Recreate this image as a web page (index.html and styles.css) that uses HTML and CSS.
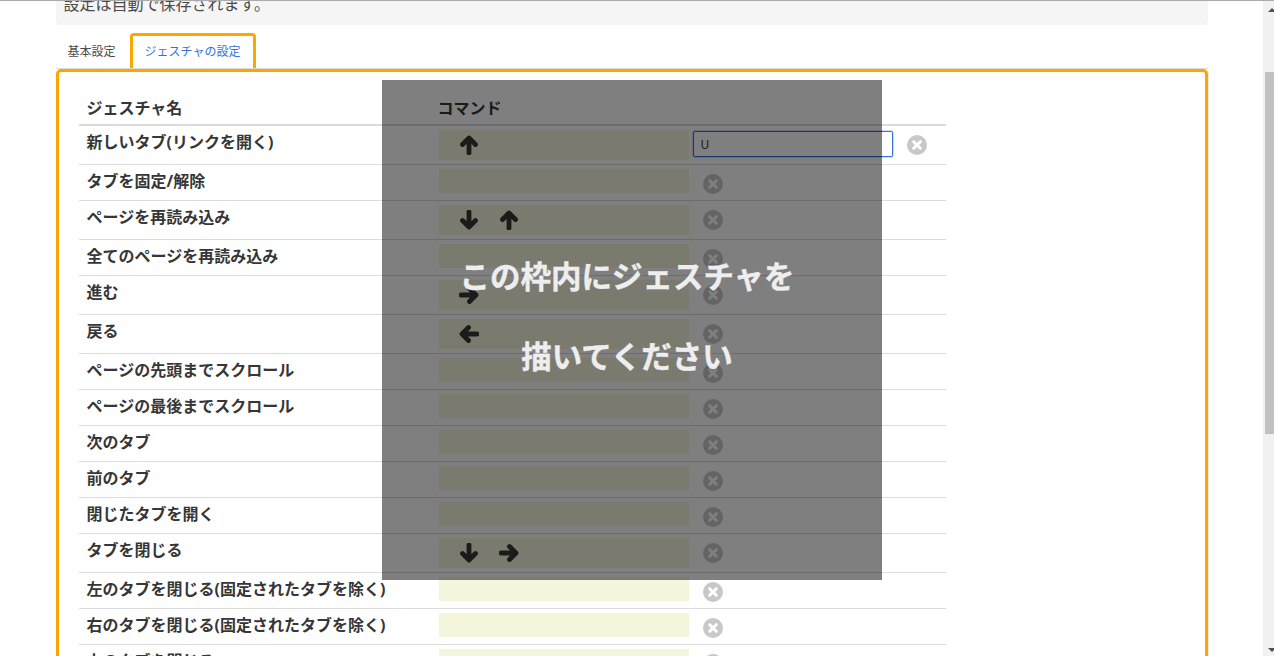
FILE: index.html
```html
<!DOCTYPE html>
<html lang="ja">
<head>
<meta charset="utf-8">
<title>ジェスチャの設定</title>
<link rel="stylesheet" href="styles.css">
</head>
<body>
<svg class="defs" width="0" height="0" aria-hidden="true">
  <defs>
    <symbol id="arrow-up" viewBox="0 0 20 20"><path d="M10 18V3.5M3.5 9.5L10 3L16.5 9.5" fill="none" stroke="currentColor" stroke-width="4.8" stroke-linejoin="round" stroke-linecap="round"/></symbol>
    <symbol id="arrow-down" viewBox="0 0 20 20"><path d="M10 2V16.5M3.5 10.5L10 17L16.5 10.5" fill="none" stroke="currentColor" stroke-width="4.8" stroke-linejoin="round" stroke-linecap="round"/></symbol>
    <symbol id="arrow-right" viewBox="0 0 20 20"><path d="M2 10H16.5M10.5 3.5L17 10L10.5 16.5" fill="none" stroke="currentColor" stroke-width="4.8" stroke-linejoin="round" stroke-linecap="round"/></symbol>
    <symbol id="arrow-left" viewBox="0 0 20 20"><path d="M18 10H3.5M9.5 3.5L3 10L9.5 16.5" fill="none" stroke="currentColor" stroke-width="4.8" stroke-linejoin="round" stroke-linecap="round"/></symbol>
    <symbol id="del" viewBox="0 0 20 20"><circle cx="10" cy="10" r="10" fill="#c8c8c8"/><path d="M6.7 6.7L13.3 13.3M13.3 6.7L6.7 13.3" stroke="#fff" stroke-width="3" stroke-linecap="round"/></symbol>
  </defs>
</svg>
<div class="window">
  <main class="page">
    <div class="container">
      <div class="notice"><p class="notice-text">設定は自動で保存されます。</p></div>
      <nav class="tabs">
        <a class="tab">基本設定</a>
        <a class="tab tab-active">ジェスチャの設定</a>
      </nav>
      <section class="panel">
        <div class="table">
          <div class="row row-head"><div class="name">ジェスチャ名</div><div class="head-cmd">コマンド</div></div>
          <div class="row">
            <div class="name">新しいタブ(リンクを開く)</div>
            <div class="cmd cmd-tall"><svg class="arrow"><use href="#arrow-up"/></svg></div>
            <input class="key" type="text" value="U">
            <svg class="del"><use href="#del"/></svg>
          </div>
          <div class="row"><div class="name">タブを固定/解除</div><div class="cmd"></div><svg class="del"><use href="#del"/></svg></div>
          <div class="row"><div class="name">ページを再読み込み</div><div class="cmd cmd-tall"><svg class="arrow"><use href="#arrow-down"/></svg><svg class="arrow"><use href="#arrow-up"/></svg></div><svg class="del"><use href="#del"/></svg></div>
          <div class="row"><div class="name">全てのページを再読み込み</div><div class="cmd"></div><svg class="del"><use href="#del"/></svg></div>
          <div class="row"><div class="name">進む</div><div class="cmd cmd-tall"><svg class="arrow"><use href="#arrow-right"/></svg></div><svg class="del"><use href="#del"/></svg></div>
          <div class="row"><div class="name">戻る</div><div class="cmd cmd-tall"><svg class="arrow"><use href="#arrow-left"/></svg></div><svg class="del"><use href="#del"/></svg></div>
          <div class="row"><div class="name">ページの先頭までスクロール</div><div class="cmd"></div><svg class="del"><use href="#del"/></svg></div>
          <div class="row"><div class="name">ページの最後までスクロール</div><div class="cmd"></div><svg class="del"><use href="#del"/></svg></div>
          <div class="row"><div class="name">次のタブ</div><div class="cmd"></div><svg class="del"><use href="#del"/></svg></div>
          <div class="row"><div class="name">前のタブ</div><div class="cmd"></div><svg class="del"><use href="#del"/></svg></div>
          <div class="row"><div class="name">閉じたタブを開く</div><div class="cmd"></div><svg class="del"><use href="#del"/></svg></div>
          <div class="row"><div class="name">タブを閉じる</div><div class="cmd cmd-tall"><svg class="arrow"><use href="#arrow-down"/></svg><svg class="arrow"><use href="#arrow-right"/></svg></div><svg class="del"><use href="#del"/></svg></div>
          <div class="row"><div class="name">左のタブを閉じる(固定されたタブを除く)</div><div class="cmd"></div><svg class="del"><use href="#del"/></svg></div>
          <div class="row"><div class="name">右のタブを閉じる(固定されたタブを除く)</div><div class="cmd"></div><svg class="del"><use href="#del"/></svg></div>
          <div class="row"><div class="name">上のタブを閉じる</div><div class="cmd"></div><svg class="del"><use href="#del"/></svg></div>
        </div>
      </section>
    </div>
  </main>
  <div class="scrollbar">
    <span class="sb-arrow sb-up"></span>
    <span class="sb-thumb"></span>
    <span class="sb-arrow sb-down"></span>
  </div>
  <div class="overlay"><p class="overlay-text">この枠内にジェスチャを<br>描いてください</p></div>
</div>
</body>
</html>
```
FILE: styles.css
```css
* { box-sizing: border-box; }
html, body { margin: 0; height: 100%; overflow: hidden; background: #fff; }
body {
  font-family: "Noto Sans", "Noto Sans CJK JP", sans-serif;
  color: #363636;
  font-size: 16px;
}
.defs { position: absolute; }
.window {
  position: relative;
  display: flex;
  width: 1274px;
  height: 656px;
  overflow: hidden;
  border-top: 1px solid #ababab;
}
.page { width: 1263px; flex: none; overflow: hidden; }
.container { width: 1152px; margin: 0 auto; }

.notice {
  height: 24px;
  background: #f5f5f5;
  border-radius: 0 0 4px 4px;
  padding-left: 8px;
  overflow: hidden;
}
.notice-text { margin: -9px 0 0; line-height: 24px; color: #4a4a4a; }

.tabs {
  display: flex;
  gap: 2px;
  height: 36px;
  margin-top: 8px;
  border-bottom: 1px solid #dbdbdb;
  font-size: 12px;
}
.tab {
  width: 72px;
  height: 35px;
  line-height: 37px;
  text-align: center;
  color: #4a4a4a;
}
.tab-active {
  width: 126px;
  color: #3273dc;
  background: #fff;
  border: 3px solid #ffa500;
  border-bottom: 0;
  border-radius: 4px 4px 0 0;
  line-height: 32px;
}

.panel {
  height: 700px;
  border: 3px solid #ffa500;
  border-radius: 5px;
  box-shadow: 1px 0 0 #e8e8e8;
  padding: 21px 20px 0;
}
.table { width: 867px; }
.row {
  display: flex;
  align-items: flex-start;
  min-height: 36px;
  padding: 4px 0;
  border-bottom: 1px solid #dbdbdb;
}
.row-head {
  min-height: 33px;
  padding: 3px 0 0;
  border-bottom-width: 2px;
}
.name {
  flex: none;
  width: 360px;
  padding-left: 8px;
  font-weight: 700;
  line-height: 24px;
  white-space: nowrap;
}
.head-cmd { font-weight: 700; line-height: 24px; margin-left: -1px; }
.cmd {
  flex: none;
  display: flex;
  align-items: center;
  gap: 20px;
  width: 250px;
  height: 24px;
  padding-left: 20px;
  background: #f5f5dc;
}
.cmd-tall { height: 30px; }
.arrow { flex: none; width: 20px; height: 20px; color: #363636; }
.key {
  flex: none;
  width: 200px;
  height: 26px;
  margin: 1px 0 0 4px;
  padding: 0 7px;
  border: 1px solid #3273dc;
  border-radius: 2px;
  background: #fff;
  color: #363636;
  font: 12px "Noto Sans", sans-serif;
  box-shadow: 0 0 0 1px rgba(50, 115, 220, .25);
  outline: 0;
}
.del { flex: none; width: 20px; height: 20px; margin: 5px 0 0 14px; }

.scrollbar {
  position: relative;
  flex: none;
  width: 17px;
  background: #f1f1f1;
}
.sb-thumb {
  position: absolute;
  top: 71px;
  left: 2px;
  width: 15px;
  height: 362px;
  background: #c1c1c1;
}
.sb-arrow {
  position: absolute;
  left: 5px;
  width: 0;
  height: 0;
  border-left: 4px solid transparent;
  border-right: 4px solid transparent;
}
.sb-up { top: 7px; border-bottom: 4px solid #505050; }
.sb-down { bottom: 4px; border-top: 4px solid #505050; }

.overlay {
  position: absolute;
  top: 79px;
  left: 382px;
  width: 500px;
  height: 500px;
  padding: 156px 10px 0 0;
  background: rgba(0, 0, 0, .5);
  text-align: center;
}
.overlay-text {
  margin: 0;
  color: #eee;
  font-size: 30.5px;
  font-weight: 700;
  line-height: 80px;
  -webkit-text-stroke: .4px #eee;
}
```
